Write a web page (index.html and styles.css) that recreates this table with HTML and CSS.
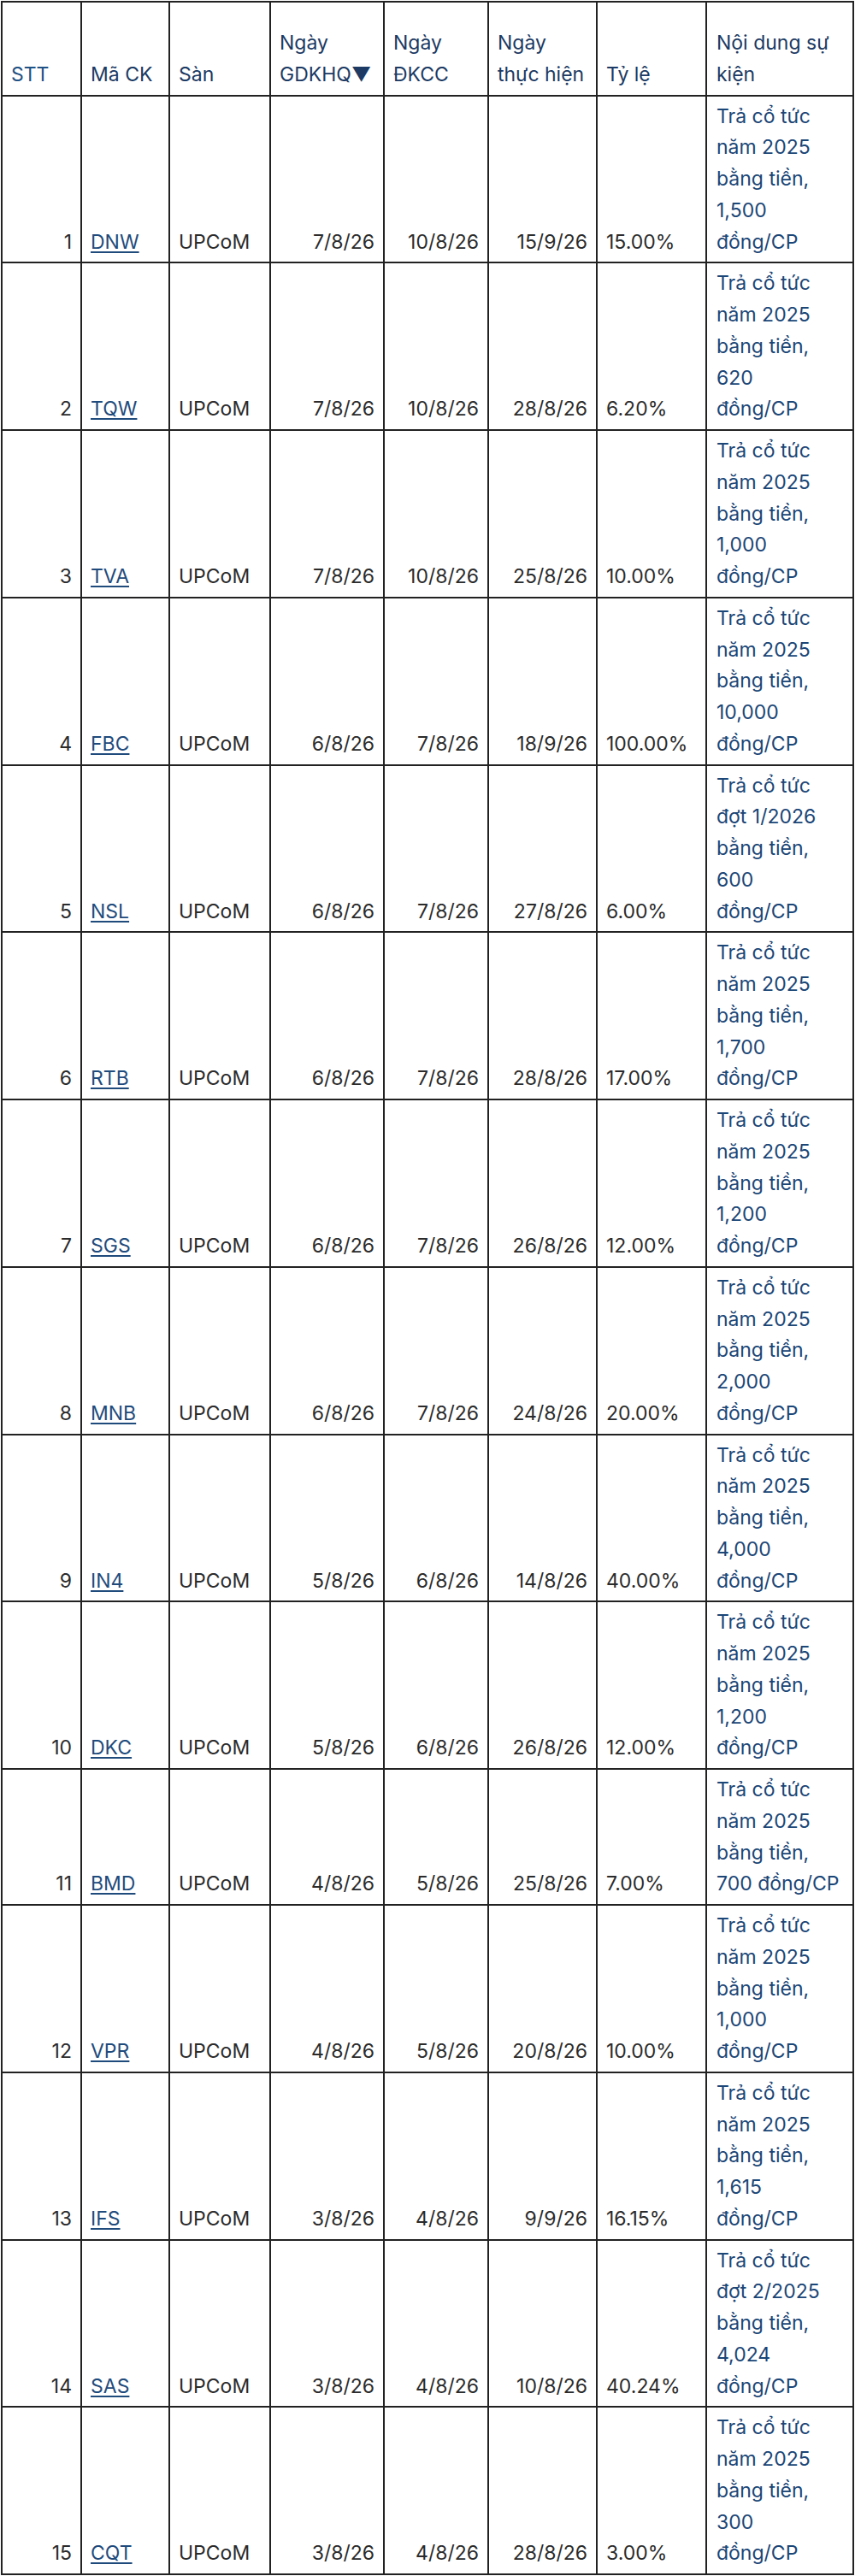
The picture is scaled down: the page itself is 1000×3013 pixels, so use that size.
FILE: index.html
```html
<!DOCTYPE html>
<html lang="vi">
<head>
<meta charset="utf-8">
<title>Lịch sự kiện</title>
<link rel="stylesheet" href="styles.css">
</head>
<body>
<table class="events">
  <colgroup>
    <col class="c-stt"><col class="c-code"><col class="c-ex"><col class="c-d1"><col class="c-d2"><col class="c-d3"><col class="c-rate"><col class="c-desc">
  </colgroup>
  <thead>
    <tr>
      <th class="h-stt">STT</th>
      <th>Mã CK</th>
      <th>Sàn</th>
      <th>Ngày GDKHQ▼</th>
      <th>Ngày ĐKCC</th>
      <th>Ngày thực hiện</th>
      <th>Tỷ lệ</th>
      <th class="desc">Nội dung sự kiện</th>
    </tr>
  </thead>
  <tbody>
    <tr><td class="num">1</td><td><a href="#">DNW</a></td><td>UPCoM</td><td class="num">7/8/26</td><td class="num">10/8/26</td><td class="num">15/9/26</td><td>15.00%</td><td class="desc">Trả cổ tức năm 2025 bằng tiền, 1,500 đồng/CP</td></tr>
    <tr><td class="num">2</td><td><a href="#">TQW</a></td><td>UPCoM</td><td class="num">7/8/26</td><td class="num">10/8/26</td><td class="num">28/8/26</td><td>6.20%</td><td class="desc">Trả cổ tức năm 2025 bằng tiền, 620 đồng/CP</td></tr>
    <tr><td class="num">3</td><td><a href="#">TVA</a></td><td>UPCoM</td><td class="num">7/8/26</td><td class="num">10/8/26</td><td class="num">25/8/26</td><td>10.00%</td><td class="desc">Trả cổ tức năm 2025 bằng tiền, 1,000 đồng/CP</td></tr>
    <tr><td class="num">4</td><td><a href="#">FBC</a></td><td>UPCoM</td><td class="num">6/8/26</td><td class="num">7/8/26</td><td class="num">18/9/26</td><td>100.00%</td><td class="desc">Trả cổ tức năm 2025 bằng tiền, 10,000 đồng/CP</td></tr>
    <tr><td class="num">5</td><td><a href="#">NSL</a></td><td>UPCoM</td><td class="num">6/8/26</td><td class="num">7/8/26</td><td class="num">27/8/26</td><td>6.00%</td><td class="desc">Trả cổ tức đợt 1/2026 bằng tiền, 600 đồng/CP</td></tr>
    <tr><td class="num">6</td><td><a href="#">RTB</a></td><td>UPCoM</td><td class="num">6/8/26</td><td class="num">7/8/26</td><td class="num">28/8/26</td><td>17.00%</td><td class="desc">Trả cổ tức năm 2025 bằng tiền, 1,700 đồng/CP</td></tr>
    <tr><td class="num">7</td><td><a href="#">SGS</a></td><td>UPCoM</td><td class="num">6/8/26</td><td class="num">7/8/26</td><td class="num">26/8/26</td><td>12.00%</td><td class="desc">Trả cổ tức năm 2025 bằng tiền, 1,200 đồng/CP</td></tr>
    <tr><td class="num">8</td><td><a href="#">MNB</a></td><td>UPCoM</td><td class="num">6/8/26</td><td class="num">7/8/26</td><td class="num">24/8/26</td><td>20.00%</td><td class="desc">Trả cổ tức năm 2025 bằng tiền, 2,000 đồng/CP</td></tr>
    <tr><td class="num">9</td><td><a href="#">IN4</a></td><td>UPCoM</td><td class="num">5/8/26</td><td class="num">6/8/26</td><td class="num">14/8/26</td><td>40.00%</td><td class="desc">Trả cổ tức năm 2025 bằng tiền, 4,000 đồng/CP</td></tr>
    <tr><td class="num">10</td><td><a href="#">DKC</a></td><td>UPCoM</td><td class="num">5/8/26</td><td class="num">6/8/26</td><td class="num">26/8/26</td><td>12.00%</td><td class="desc">Trả cổ tức năm 2025 bằng tiền, 1,200 đồng/CP</td></tr>
    <tr><td class="num">11</td><td><a href="#">BMD</a></td><td>UPCoM</td><td class="num">4/8/26</td><td class="num">5/8/26</td><td class="num">25/8/26</td><td>7.00%</td><td class="desc">Trả cổ tức năm 2025 bằng tiền, 700 đồng/CP</td></tr>
    <tr><td class="num">12</td><td><a href="#">VPR</a></td><td>UPCoM</td><td class="num">4/8/26</td><td class="num">5/8/26</td><td class="num">20/8/26</td><td>10.00%</td><td class="desc">Trả cổ tức năm 2025 bằng tiền, 1,000 đồng/CP</td></tr>
    <tr><td class="num">13</td><td><a href="#">IFS</a></td><td>UPCoM</td><td class="num">3/8/26</td><td class="num">4/8/26</td><td class="num">9/9/26</td><td>16.15%</td><td class="desc">Trả cổ tức năm 2025 bằng tiền, 1,615 đồng/CP</td></tr>
    <tr><td class="num">14</td><td><a href="#">SAS</a></td><td>UPCoM</td><td class="num">3/8/26</td><td class="num">4/8/26</td><td class="num">10/8/26</td><td>40.24%</td><td class="desc">Trả cổ tức đợt 2/2025 bằng tiền, 4,024 đồng/CP</td></tr>
    <tr><td class="num">15</td><td><a href="#">CQT</a></td><td>UPCoM</td><td class="num">3/8/26</td><td class="num">4/8/26</td><td class="num">28/8/26</td><td>3.00%</td><td class="desc">Trả cổ tức năm 2025 bằng tiền, 300 đồng/CP</td></tr>
  </tbody>
</table>
</body>
</html>
```

FILE: styles.css
```css
html, body {
  margin: 0;
  padding: 0;
  background: #ffffff;
}

body {
  padding: 1px 1px 0 1px;
  font-family: Inter, "Noto Sans", "Liberation Sans", sans-serif;
  font-size: 23px;
  line-height: 36.75px;
  color: #2b2b2b;
}

.events {
  width: 998px;
  table-layout: fixed;
  border-collapse: collapse;
  border: 2px solid #222222;
}

.c-stt { width: 93px; }
.c-code { width: 103px; }
.c-ex { width: 118px; }
.c-d1 { width: 133px; }
.c-d2 { width: 122px; }
.c-d3 { width: 127px; }
.c-rate { width: 128px; }
.c-desc { width: 172px; }

.events th,
.events td {
  border: 2px solid #222222;
  padding: 5px 10px;
  vertical-align: bottom;
  text-align: left;
  font-weight: 400;
}

.events th {
  padding-top: 29px;
  color: #1c3a63;
}

.events th.h-stt {
  color: #1f5184;
}

.events td.num {
  text-align: right;
}

.events a {
  color: #1f4b7c;
  text-decoration: underline;
  text-underline-offset: 3px;
}

.events th.desc {
  padding-left: 11px;
  padding-right: 15px;
}

.events td.desc {
  padding-left: 11px;
  padding-right: 15px;
  color: #1b4676;
}
```
